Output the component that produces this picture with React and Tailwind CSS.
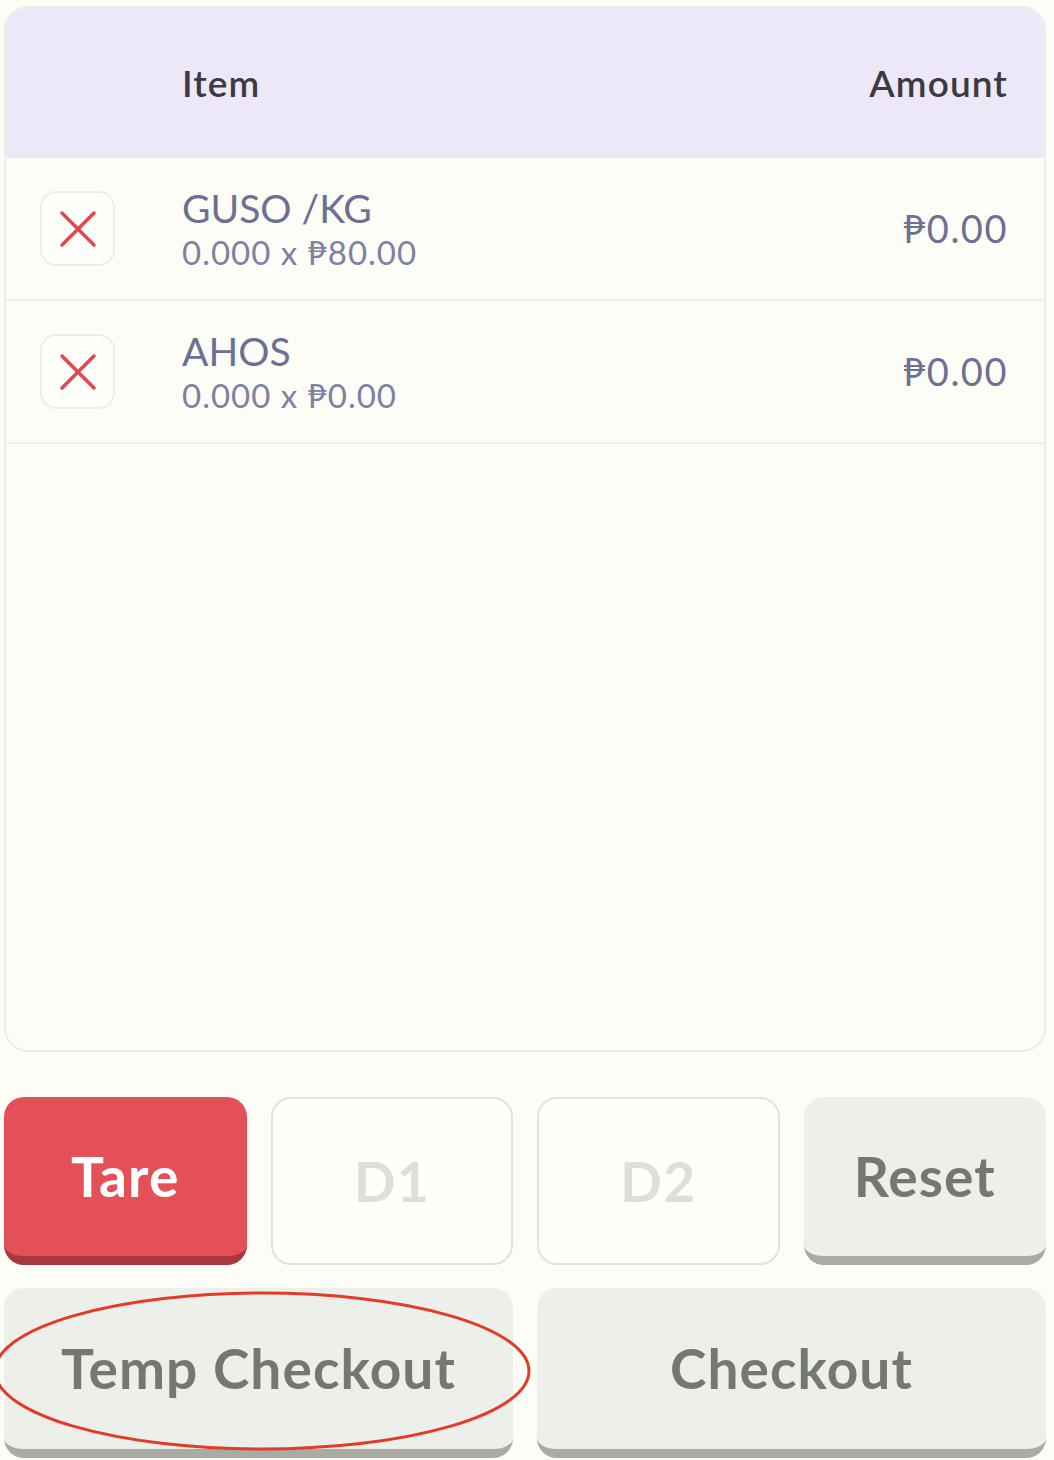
import React from 'react';

const items = [
  { name: 'GUSO /KG', qty: '0.000', price: '₱80.00', amount: '₱0.00' },
  { name: 'AHOS', qty: '0.000', price: '₱0.00', amount: '₱0.00' },
];

function RemoveButton() {
  return (
    <button className="w-[75px] h-[75px] shrink-0 rounded-[16px] border-2 border-[#eceee8] bg-[#fefefb] flex items-center justify-center">
      <svg width="40" height="40" viewBox="0 0 40 40" fill="none">
        <path d="M4 4 L36 36 M36 4 L4 36" stroke="#e2474f" strokeWidth="3.5" strokeLinecap="round" />
      </svg>
    </button>
  );
}

export default function App() {
  return (
    <div className="relative w-[1054px] h-[1460px] bg-[#fdfdf7] pl-[4px] pr-[8px] pt-[6px] font-['Lato','DejaVu_Sans',sans-serif] overflow-hidden">
      {/* Order table */}
      <div className="h-[1046px] rounded-[24px] border-2 border-[#ebeee7] bg-[#fdfdf7] overflow-hidden flex flex-col">
        <div className="h-[150px] shrink-0 bg-[#ece8f7] flex items-center pl-[176px] pr-[36px] text-[37px] font-semibold tracking-[0.03em] text-[#3a3a40]">
          <span className="flex-1">Item</span>
          <span>Amount</span>
        </div>
        {items.map((it) => (
          <div key={it.name} className="h-[143px] shrink-0 border-b-2 border-[#eef0ea] flex items-center pl-[34px] pr-[36px]">
            <RemoveButton />
            <div className="flex-1 pl-[67px] flex flex-col leading-none">
              <span className="text-[39px] text-[#6c7094]">{it.name}</span>
              <span className="text-[33px] tracking-[0.03em] text-[#7d81a2] mt-[8px]">
                {it.qty} x {it.price}
              </span>
            </div>
            <span className="text-[38px] tracking-[0.04em] text-[#6c7094]">{it.amount}</span>
          </div>
        ))}
      </div>

      {/* Action buttons */}
      <div className="mt-[45px] grid grid-cols-4 gap-x-[24px] h-[168px] text-[55px] font-bold tracking-[0.02em]">
        <button className="rounded-[20px] bg-[#e35058] border-b-[9px] border-[#a8373e] text-white">
          Tare
        </button>
        <button className="rounded-[20px] bg-[#fefefb] border-2 border-[#e1e4dd] text-[#dde0d9]">
          D1
        </button>
        <button className="rounded-[20px] bg-[#fefefb] border-2 border-[#e1e4dd] text-[#dde0d9]">
          D2
        </button>
        <button className="rounded-[20px] bg-[#edf0ea] border-b-[9px] border-[#a9aca4] text-[#747970]">
          Reset
        </button>
      </div>
      <div className="mt-[23px] grid grid-cols-2 gap-x-[24px] h-[170px] text-[55px] font-bold tracking-[0.02em]">
        <button className="rounded-[20px] bg-[#edf0ea] border-b-[9px] border-[#a9aca4] text-[#747970]">
          Temp Checkout
        </button>
        <button className="rounded-[20px] bg-[#edf0ea] border-b-[9px] border-[#a9aca4] text-[#747970]">
          Checkout
        </button>
      </div>

      {/* Annotation ellipse */}
      <svg className="absolute left-0 top-0 pointer-events-none" width="1054" height="1460">
        <ellipse cx="262" cy="1371" rx="267" ry="78" fill="none" stroke="#e43b26" strokeWidth="3" />
      </svg>
    </div>
  );
}
